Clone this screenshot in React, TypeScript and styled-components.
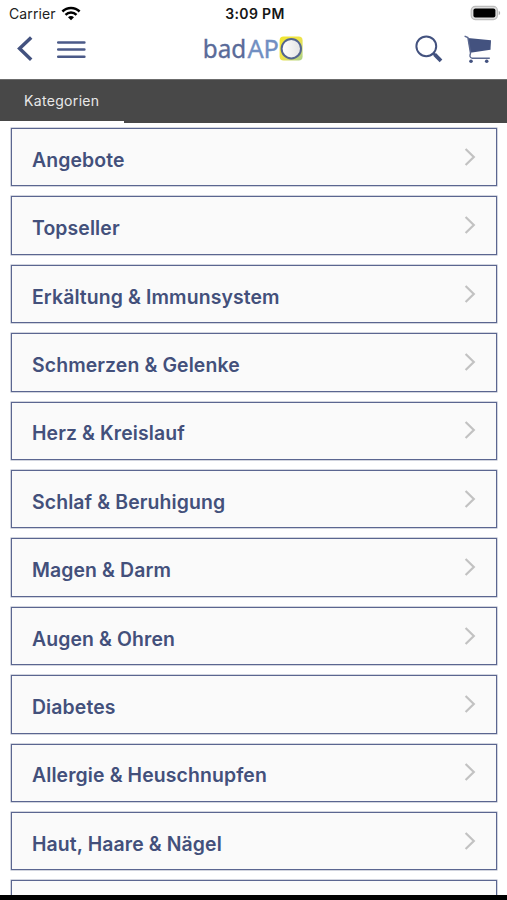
import React from "react";
import styled, { createGlobalStyle } from "styled-components";

const GlobalStyle = createGlobalStyle`
  * { box-sizing: border-box; }
  body { margin: 0; background: #fff; font-family: Inter, "Liberation Sans", sans-serif; }
`;

const Screen = styled.div`
  width: 507px;
  height: 900px;
  display: flex;
  flex-direction: column;
  overflow: hidden;
  background: #fff;
`;

const StatusBar = styled.div`
  height: 27px;
  flex: none;
  display: grid;
  grid-template-columns: 1fr auto 1fr;
  align-items: center;
  padding: 0 6px 0 9px;
  color: #222;
`;

const Carrier = styled.div`
  display: flex;
  align-items: center;
  gap: 5px;
  font-size: 14px;
  letter-spacing: 0.1px;
  svg { margin-top: -1px; }
`;

const Clock = styled.div`
  font-size: 14px;
  letter-spacing: 0.35px;
  font-weight: 600;
  color: #151515;
`;

const BatterySlot = styled.div`
  display: flex;
  justify-content: flex-end;
  margin-top: -1px;
`;

const NavBar = styled.header`
  height: 52px;
  flex: none;
  display: grid;
  grid-template-columns: 1fr 104px 1fr;
  align-items: center;
  padding: 0 15px 8px 16px;
  svg { display: block; }
`;

const NavGroup = styled.div<{ $end?: boolean }>`
  display: flex;
  align-items: center;
  justify-content: ${(p) => (p.$end ? "flex-end" : "flex-start")};
  gap: ${(p) => (p.$end ? 21 : 22)}px;
`;

const IconButton = styled.button`
  padding: 0;
  border: 0;
  background: none;
`;

const TabBar = styled.nav`
  height: 44px;
  flex: none;
  display: flex;
  background: #484848;
  border-top: 1px solid #6c6c6c;
`;

const Tab = styled.div`
  width: 124px;
  height: 43px;
  border-bottom: 2px solid #fff;
  padding-left: 24px;
  font-size: 14px;
  line-height: 42px;
  letter-spacing: 0.33px;
  color: #e8e8e8;
`;

const List = styled.main`
  flex: 1;
  min-height: 0;
  overflow: hidden;
  display: flex;
  flex-direction: column;
  gap: 10px;
  padding: 5px 10px 0 11px;
`;

const Row = styled.div`
  height: 58.41px;
  flex: none;
  display: flex;
  align-items: center;
  justify-content: space-between;
  padding: 5px 20px 0 20px;
  border: 1px solid #5b6690;
  box-shadow: 0 0 0 0.5px #a5abc0;
  background: #fafafa;
`;

const Label = styled.span`
  font-size: 19.4px;
  letter-spacing: 0.12px;
  line-height: 24px;
  font-weight: 600;
  color: #43507b;
  white-space: nowrap;
`;

const Chevron = styled.svg`
  display: block;
  margin-top: -6px;
`;

const HomeEdge = styled.div`
  height: 5px;
  flex: none;
  background: #000;
`;

const categories = [
  "Angebote",
  "Topseller",
  "Erkältung & Immunsystem",
  "Schmerzen & Gelenke",
  "Herz & Kreislauf",
  "Schlaf & Beruhigung",
  "Magen & Darm",
  "Augen & Ohren",
  "Diabetes",
  "Allergie & Heuschnupfen",
  "Haut, Haare & Nägel",
  "",
];

const WifiIcon = () => (
  <svg width="20" height="15" viewBox="0 0 20 15" fill="none" stroke="#000" strokeWidth="2.5">
    <path d="M1.4 5.5C6.2.7 13.8.7 18.6 5.5" />
    <path d="M4.5 8.8c3.1-3 7.9-3 11 0" />
    <path d="M10 14.2 7 11.2c1.7-1.5 4.3-1.5 6 0Z" fill="#000" stroke="none" />
  </svg>
);

const BatteryIcon = () => (
  <svg width="31" height="16" viewBox="0 0 31 16">
    <rect x="1.2" y="1.4" width="26.2" height="13.2" rx="4" fill="#dedede" stroke="#bdbdbd" strokeWidth="1.2" />
    <rect x="3.4" y="3.6" width="22" height="9" rx="2" fill="#000" />
    <path d="M28.7 5.8c2 .8 2 3.6 0 4.4Z" fill="#aaa" />
  </svg>
);

const BackIcon = () => (
  <svg width="18" height="28" viewBox="0 0 18 28" fill="none" stroke="#43527f" strokeWidth="3.5">
    <path d="M15.2 2.4 3.6 13.5l11.6 11.2" />
  </svg>
);

const MenuIcon = () => (
  <svg width="30" height="20" viewBox="0 0 30 20" fill="none" stroke="#4b5a88" strokeWidth="2.5" strokeLinecap="round">
    <path d="M2.2 3.5h26.2M2.2 10.6h26.2M2.2 17.7h26.2" />
  </svg>
);

const Logo = () => (
  <svg width="104" height="40" viewBox="0 -6 104 40">
    <defs>
      <linearGradient id="tile" x1="0" y1="0" x2="1" y2="1">
        <stop offset="0" stopColor="#f0e62c" />
        <stop offset="0.5" stopColor="#efe34a" />
        <stop offset="1" stopColor="#a9d18d" />
      </linearGradient>
      <linearGradient id="disc">
        <stop offset="0" stopColor="#fff" />
        <stop offset="1" stopColor="#e3e3e3" />
      </linearGradient>
    </defs>
    <g fontFamily="'Noto Sans', sans-serif" fontSize="25.5" strokeWidth="0.35">
      <text x="0.8" y="23.4" textLength="43.5" lengthAdjust="spacingAndGlyphs" fill="#5a6b99" stroke="#5a6b99">bad</text>
      <text x="45.4" y="23.4" textLength="31.6" lengthAdjust="spacingAndGlyphs" fill="#718fc2" stroke="#718fc2">AP</text>
    </g>
    <rect x="77.6" y="1.6" width="23" height="23.8" rx="4" fill="url(#tile)" />
    <circle cx="89.3" cy="13.7" r="9.7" fill="url(#disc)" stroke="#53658f" strokeWidth="2" />
  </svg>
);

const SearchIcon = () => (
  <svg width="28" height="28" viewBox="0 0 28 28" fill="none" stroke="#43527f">
    <circle cx="11.3" cy="11.3" r="9.9" strokeWidth="2" />
    <path d="m18.4 18.3 2 2" strokeWidth="2.4" />
    <path d="m19.6 19.4 6.4 6.4" strokeWidth="3.8" />
  </svg>
);

const CartIcon = () => (
  <svg width="28" height="28" viewBox="0 0 28 28" fill="none">
    <path d="M3.8 3.1 27 5.3 26.5 14.8 6.3 17.8Z" fill="#43527f" />
    <path d="M.6 1.2 3.9 2.6 6.5 18.2C5.4 21 5.9 22.8 8.2 23.2H25.8" stroke="#5b6890" strokeWidth="1.4" />
    <circle cx="7" cy="26.2" r="1.8" fill="#43527f" />
    <circle cx="22.7" cy="26.2" r="1.8" fill="#43527f" />
  </svg>
);

export default function App() {
  return (
    <Screen>
      <GlobalStyle />
      <StatusBar>
        <Carrier>
          Carrier
          <WifiIcon />
        </Carrier>
        <Clock>3:09 PM</Clock>
        <BatterySlot>
          <BatteryIcon />
        </BatterySlot>
      </StatusBar>
      <NavBar>
        <NavGroup>
          <IconButton aria-label="Zurück"><BackIcon /></IconButton>
          <IconButton aria-label="Menü"><MenuIcon /></IconButton>
        </NavGroup>
        <Logo />
        <NavGroup $end>
          <IconButton aria-label="Suche"><SearchIcon /></IconButton>
          <IconButton aria-label="Warenkorb"><CartIcon /></IconButton>
        </NavGroup>
      </NavBar>
      <TabBar>
        <Tab>Kategorien</Tab>
      </TabBar>
      <List>
        {categories.map((name, i) => (
          <Row key={i}>
            <Label>{name}</Label>
            {name && (
              <Chevron width="12" height="20" viewBox="0 0 12 20" fill="none" stroke="#c2c2c2" strokeWidth="2.2">
                <path d="m1.6 2 8.2 8-8.2 8" />
              </Chevron>
            )}
          </Row>
        ))}
      </List>
      <HomeEdge />
    </Screen>
  );
}
